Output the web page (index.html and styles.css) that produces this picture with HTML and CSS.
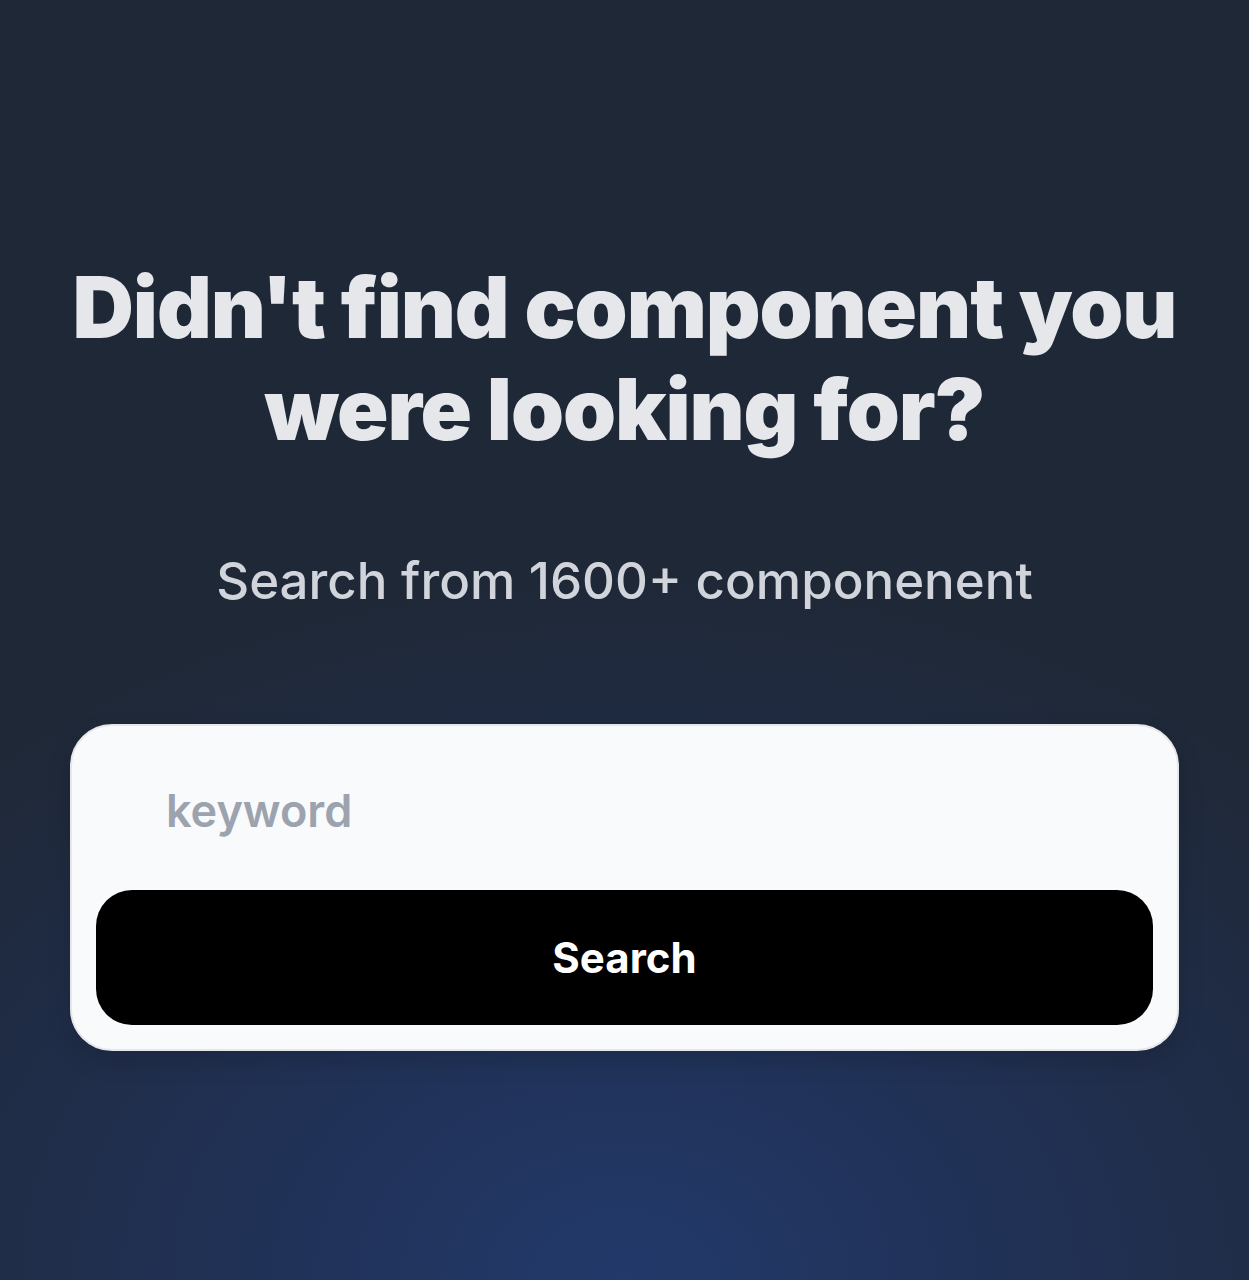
FILE: index.html
```html
<!DOCTYPE html>
<html lang="en">
<head>
<meta charset="utf-8">
<title>Search components</title>
<link rel="stylesheet" href="styles.css">
</head>
<body>
<main class="hero">
  <h1 class="title">Didn't find component you<br>were looking for?</h1>
  <p class="subtitle">Search from 1600+ componenent</p>
  <form class="search-card" onsubmit="return false">
    <input class="search-input" type="text" placeholder="keyword">
    <button class="search-button" type="submit">Search</button>
  </form>
</main>
</body>
</html>
```

FILE: styles.css
```css
* { box-sizing: border-box; }
html, body { margin: 0; padding: 0; }
body {
  width: 1249px;
  height: 1280px;
  overflow: hidden;
  font-family: Inter, "Noto Sans", sans-serif;
  background-color: #1f2837;
  background-image: radial-gradient(ellipse 75% 55% at 50% 100%, #22396a 0%, rgba(33, 52, 96, 0.7) 45%, rgba(31, 40, 55, 0) 100%);
}
.hero {
  display: flex;
  flex-direction: column;
  align-items: center;
  padding: 257px 70px 0;
}
.title {
  margin: 0;
  text-align: center;
  color: #e5e7eb;
  font-size: 85px;
  line-height: 102px;
  font-weight: 900;
  letter-spacing: -0.013em;
}
.subtitle {
  margin: 90px 0 0;
  color: #d1d5db;
  font-size: 51px;
  line-height: 60px;
  font-weight: 500;
}
.search-card {
  margin-top: 113px;
  width: 1109px;
  display: flex;
  flex-direction: column;
  gap: 20px;
  padding: 24px 24px 24px;
  background: #f9fafb;
  border: 2px solid #e5e7eb;
  border-radius: 42px;
  box-shadow: 0 10px 25px rgba(0, 0, 0, 0.15);
}
.search-input {
  height: 120px;
  border: 0;
  outline: none;
  background: transparent;
  padding: 0 0 0 70px;
  font-family: inherit;
  font-size: 45px;
  font-weight: 600;
  color: #374151;
}
.search-input::placeholder { color: #9ca3af; }
.search-button {
  height: 135px;
  border: 0;
  border-radius: 36px;
  background: #000;
  color: #fff;
  font-family: inherit;
  font-size: 42px;
  font-weight: 700;
}
```
